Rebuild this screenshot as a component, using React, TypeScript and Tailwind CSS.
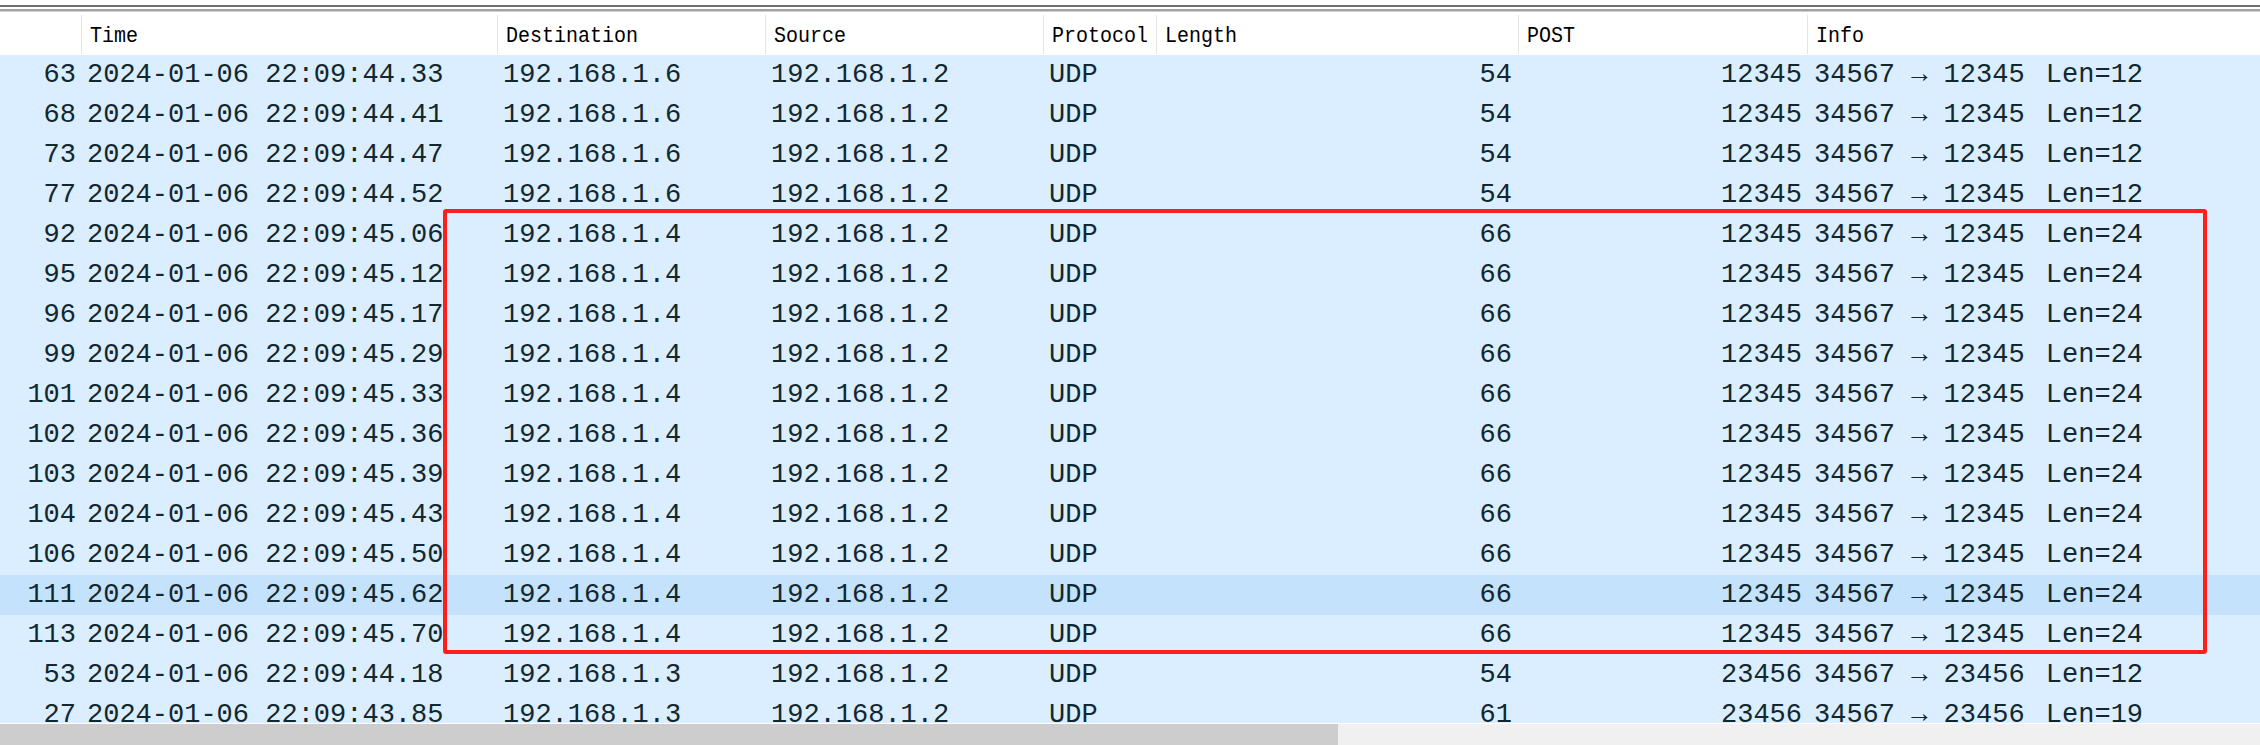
import React from "react";

type Row = {
  no: string;
  time: string;
  dst: string;
  src: string;
  proto: string;
  len: string;
  post: string;
  infoLen: string;
};

const mk = (
  no: string,
  t: string,
  dst: string,
  len: string,
  post: string,
  infoLen: string
): Row => ({
  no,
  time: `2024-01-06 22:09:${t}`,
  dst,
  src: "192.168.1.2",
  proto: "UDP",
  len,
  post,
  infoLen,
});

const rows: Row[] = [
  mk("63", "44.33", "192.168.1.6", "54", "12345", "12"),
  mk("68", "44.41", "192.168.1.6", "54", "12345", "12"),
  mk("73", "44.47", "192.168.1.6", "54", "12345", "12"),
  mk("77", "44.52", "192.168.1.6", "54", "12345", "12"),
  mk("92", "45.06", "192.168.1.4", "66", "12345", "24"),
  mk("95", "45.12", "192.168.1.4", "66", "12345", "24"),
  mk("96", "45.17", "192.168.1.4", "66", "12345", "24"),
  mk("99", "45.29", "192.168.1.4", "66", "12345", "24"),
  mk("101", "45.33", "192.168.1.4", "66", "12345", "24"),
  mk("102", "45.36", "192.168.1.4", "66", "12345", "24"),
  mk("103", "45.39", "192.168.1.4", "66", "12345", "24"),
  mk("104", "45.43", "192.168.1.4", "66", "12345", "24"),
  mk("106", "45.50", "192.168.1.4", "66", "12345", "24"),
  mk("111", "45.62", "192.168.1.4", "66", "12345", "24"),
  mk("113", "45.70", "192.168.1.4", "66", "12345", "24"),
  mk("53", "44.18", "192.168.1.3", "54", "23456", "12"),
  mk("27", "43.85", "192.168.1.3", "61", "23456", "19"),
];

function HeaderCell({ w, label, first }: { w: string; label: string; first?: boolean }) {
  return (
    <div className={`${w} flex-none pt-[3px] pb-[1px]`}>
      <div
        className={`h-full ${first ? "" : "border-l border-[#e3e3e3]"} pl-[8px] pt-[13px] leading-[20px] whitespace-pre`}
      >
        <span className="inline-block origin-bottom scale-y-[1.14]">{label}</span>
      </div>
    </div>
  );
}

export default function App() {
  return (
    <div className="relative w-[2260px] h-[745px] overflow-hidden bg-white flex flex-col">
      {/* top frame lines */}
      <div className="h-[5px] bg-white flex-none" />
      <div className="h-[2px] bg-[#6e6e6e] flex-none" />
      <div className="h-[2px] bg-white flex-none" />
      <div className="h-[2px] bg-[#a2a2a2] flex-none" />
      <div className="h-[1px] bg-[#cfcfcf] flex-none" />

      {/* header */}
      <div className="flex h-[43px] flex-none bg-white text-black text-[20px] font-['Liberation_Mono',monospace]">
        <HeaderCell w="w-[81px]" label="" first />
        <HeaderCell w="w-[416px]" label="Time" />
        <HeaderCell w="w-[268px]" label="Destination" />
        <HeaderCell w="w-[278px]" label="Source" />
        <HeaderCell w="w-[113px]" label="Protocol" />
        <HeaderCell w="w-[362px]" label="Length" />
        <HeaderCell w="w-[289px]" label="POST" />
        <HeaderCell w="flex-1" label="Info" />
      </div>

      {/* body */}
      <div className="h-[668px] flex-none overflow-hidden bg-[#daeeff] text-[#12272e] text-[27px] leading-[40px] font-['Liberation_Mono',monospace]">
        {rows.map((r, i) => (
          <div
            key={i}
            className={`flex h-[40px] whitespace-pre ${i === 13 ? "bg-[#c4e2fc]" : "bg-[#daeeff]"}`}
          >
            <div className="w-[81px] flex-none text-right pr-[5px]">{r.no}</div>
            <div className="w-[416px] flex-none pl-[6px]">{r.time}</div>
            <div className="w-[268px] flex-none pl-[6px]">{r.dst}</div>
            <div className="w-[278px] flex-none pl-[6px]">{r.src}</div>
            <div className="w-[113px] flex-none pl-[6px]">{r.proto}</div>
            <div className="w-[362px] flex-none text-right pr-[6px]">{r.len}</div>
            <div className="w-[289px] flex-none text-right pr-[5px]">{r.post}</div>
            <div className="flex-1 pl-[7px]">
              {`34567 \u2192 ${r.post} `}
              <span className="ml-[5px]">{`Len=${r.infoLen}`}</span>
            </div>
          </div>
        ))}
      </div>

      <div className="h-[1px] bg-white flex-none" />
      {/* horizontal scrollbar */}
      <div className="h-[21px] flex-none bg-[#f0f0f0] flex">
        <div className="w-[1338px] h-full bg-[#cdcdcd]" />
      </div>

      {/* red annotation box */}
      <div className="absolute left-[443px] top-[209px] w-[1764px] h-[445px] border-4 border-[#ff1f1a] rounded-[3px]" />
    </div>
  );
}
